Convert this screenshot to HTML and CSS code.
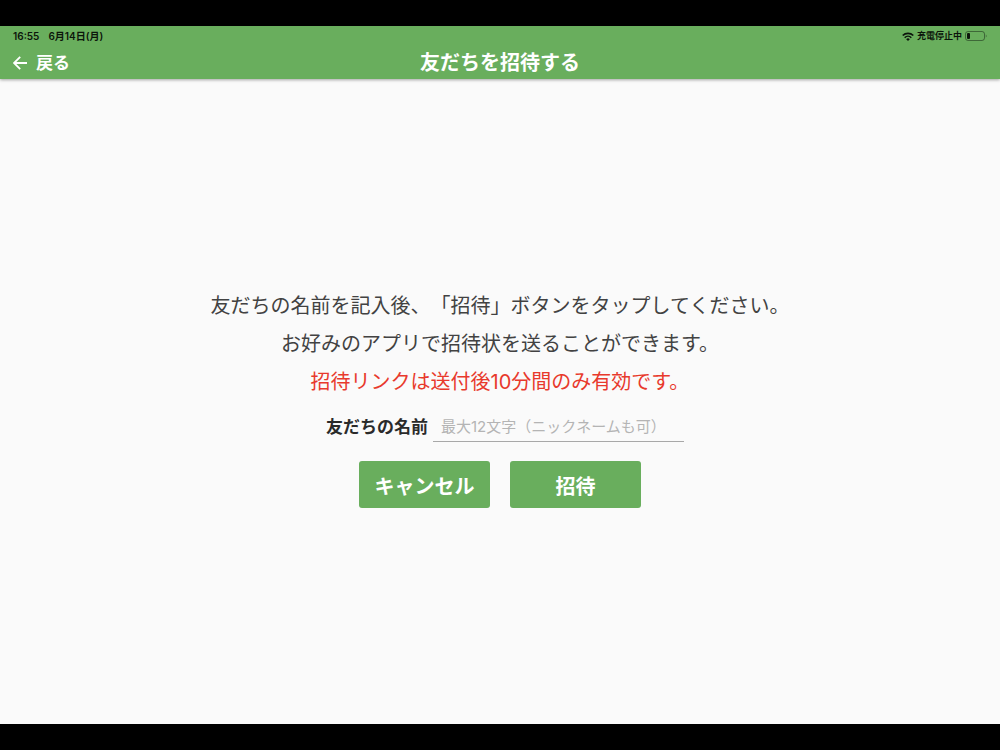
FILE: index.html
```html
<!DOCTYPE html>
<html lang="ja">
<head>
  <meta charset="UTF-8" />
  <meta name="viewport" content="width=device-width, initial-scale=1" />
  <title>友だちを招待する</title>
  <link rel="stylesheet" href="styles.css">
</head>
<body>
  <div class="app">
    <header class="header">
      <div class="status-bar">
        <div class="status-left">
          <span>16:55</span>
          <span>6月14日(月)</span>
        </div>
        <div class="status-right">
          <svg class="wifi" viewBox="0 0 12 9" width="12" height="9">
            <path d="M0.7 3.5 A7.5 7.5 0 0 1 11.3 3.5" fill="none" stroke="#0c150b" stroke-width="1.7" />
            <path d="M2.7 5.7 A4.7 4.7 0 0 1 9.3 5.7" fill="none" stroke="#0c150b" stroke-width="1.5" />
            <path d="M6 9 L4.2 7.2 A2.5 2.5 0 0 1 7.8 7.2 Z" fill="#0c150b" />
          </svg>
          <span>充電停止中</span>
          <svg class="battery" viewBox="0 0 22 10" width="22" height="10">
            <rect x="0.5" y="0.5" width="19" height="9" rx="2.5" fill="none" stroke="#0c150b" stroke-opacity="0.45" />
            <rect x="2" y="2" width="3" height="6" rx="1" fill="#0c150b" />
            <path d="M20.8 3.4 Q22.4 5 20.8 6.6 Z" fill="#0c150b" fill-opacity="0.5" />
          </svg>
        </div>
      </div>
      <div class="nav-bar">
        <button type="button" class="back">
          <svg viewBox="0 0 14 14" width="14" height="14">
            <path d="M14 7 H1.5 M7.2 0.8 L1 7 L7.2 13.2" fill="none" stroke="#fff" stroke-width="1.8" />
          </svg>
          戻る
        </button>
        <h1 class="title">友だちを招待する</h1>
      </div>
    </header>

    <main class="main">
      <form class="invite">
        <p class="message">友だちの名前を記入後、「招待」ボタンをタップしてください。</p>
        <p class="message">お好みのアプリで招待状を送ることができます。</p>
        <p class="message warning">招待リンクは送付後10分間のみ有効です。</p>
        <div class="field">
          <label for="friendName">友だちの名前</label>
          <input type="text" id="friendName" maxlength="12" placeholder="最大12文字（ニックネームも可）" />
        </div>
        <div class="actions">
          <button type="button" class="btn">キャンセル</button>
          <button type="button" class="btn">招待</button>
        </div>
      </form>
    </main>
  </div>
</body>
</html>
```

FILE: styles.css
```css
* {
  box-sizing: border-box;
}
body {
  margin: 0;
  background: #000;
  color: #424242;
  font-family: Inter, 'Noto Sans CJK JP', sans-serif;
  text-spacing-trim: space-all;
}
.app {
  display: flex;
  flex-direction: column;
  min-height: 100vh;
  padding: 26px 0;
}

/* header */
.header {
  background: #69ae5d;
  box-shadow: 0 1px 3px rgba(0, 0, 0, 0.35);
  z-index: 1;
}
.status-bar {
  display: flex;
  align-items: flex-start;
  justify-content: space-between;
  height: 21px;
  padding: 0 13px;
  color: #0c150b;
  font-size: 10px;
  font-weight: 600;
  line-height: 20px;
}
.status-left,
.status-right {
  display: flex;
  align-items: center;
}
.status-left {
  gap: 9px;
}
.status-right {
  gap: 3px;
  font-size: 9px;
}
.nav-bar {
  display: grid;
  grid-template-columns: 1fr auto 1fr;
  align-items: center;
  height: 32px;
  padding: 0 13px;
  color: #fff;
}
.back {
  display: flex;
  align-items: center;
  justify-self: start;
  gap: 9px;
  padding: 0;
  border: none;
  background: none;
  color: #fff;
  font-family: inherit;
  font-size: 17px;
  font-weight: 600;
  line-height: 32px;
  cursor: pointer;
}
.title {
  margin: 0;
  font-size: 20px;
  font-weight: 600;
  line-height: 32px;
}

/* invite form */
.main {
  display: flex;
  flex: 1;
  align-items: center;
  justify-content: center;
  padding-bottom: 8px;
  background: #fafafa;
}
.message {
  margin: 0;
  font-size: 20px;
  line-height: 38px;
  text-align: center;
}
.warning {
  color: #e8392c;
}
.field {
  display: flex;
  justify-content: center;
  gap: 5px;
  margin-top: 11px;
  padding-left: 10px;
}
.field label {
  color: #2a2a2a;
  font-size: 17px;
  font-weight: 600;
  line-height: 30px;
}
.field input {
  width: 251px;
  height: 30px;
  padding: 0 8px;
  border: none;
  border-bottom: 1px solid #a8a8a8;
  background: none;
  color: #212121;
  font-family: inherit;
  font-size: 15px;
}
.field input::placeholder {
  color: #b4b4b4;
}
.actions {
  display: flex;
  justify-content: center;
  gap: 20px;
  margin-top: 19px;
}
.btn {
  width: 131px;
  height: 47px;
  padding: 2px 0 0;
  border: none;
  border-radius: 3px;
  background: #69ae5d;
  color: #fff;
  font-family: inherit;
  font-size: 20px;
  font-weight: 600;
  cursor: pointer;
}
```
